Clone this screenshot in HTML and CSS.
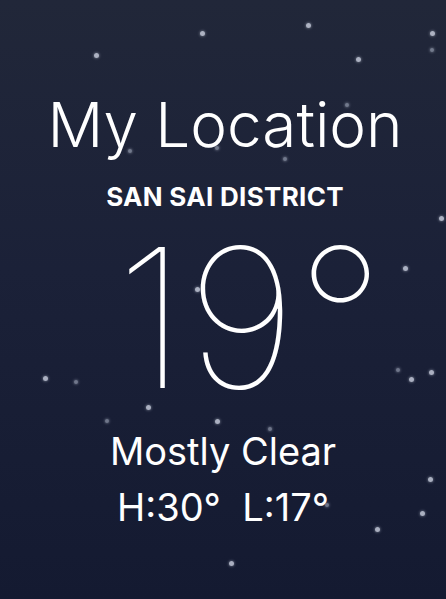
FILE: index.html
```html
<!DOCTYPE html>
<html lang="en">
<head>
    <meta charset="UTF-8">
    <meta name="viewport" content="width=device-width, initial-scale=1.0">
    <title>Weather</title>

    <link rel="stylesheet" href="styles.css">
</head>
<body>
    <div id="sky">
        <span class="star" style="left:96px;top:55px"></span>
        <span class="star" style="left:202px;top:33px"></span>
        <span class="star" style="left:308px;top:25px"></span>
        <span class="star" style="left:358px;top:59px"></span>
        <span class="star" style="left:432px;top:33px"></span>
        <span class="star small" style="left:432px;top:50px"></span>
        <span class="star small" style="left:130px;top:151px"></span>
        <span class="star small" style="left:217px;top:148px"></span>
        <span class="star small" style="left:347px;top:105px"></span>
        <span class="star small" style="left:285px;top:159px"></span>
        <span class="star" style="left:441px;top:218px"></span>
        <span class="star" style="left:405px;top:268px"></span>
        <span class="star" style="left:197px;top:289px"></span>
        <span class="star small" style="left:398px;top:370px"></span>
        <span class="star" style="left:411px;top:379px"></span>
        <span class="star" style="left:431px;top:372px"></span>
        <span class="star" style="left:45px;top:378px"></span>
        <span class="star small" style="left:76px;top:382px"></span>
        <span class="star" style="left:148px;top:407px"></span>
        <span class="star small" style="left:107px;top:421px"></span>
        <span class="star" style="left:217px;top:421px"></span>
        <span class="star small" style="left:270px;top:429px"></span>
        <span class="star small" style="left:327px;top:505px"></span>
        <span class="star" style="left:430px;top:479px"></span>
        <span class="star" style="left:422px;top:513px"></span>
        <span class="star" style="left:377px;top:529px"></span>
        <span class="star" style="left:231px;top:563px"></span>
    </div>

    <div id="container">
        <h1 class="place">My Location</h1>
        <p class="district">SAN SAI DISTRICT</p>
        <p class="temp">19°</p>
        <p class="condition">Mostly Clear</p>
        <p class="range">H:30°&nbsp; L:17°</p>
    </div>
</body>
</html>
```

FILE: styles.css
```css
*{
    margin: 0;
    padding: 0;
    box-sizing: border-box;
}
body{
    height: 100vh;
    overflow: hidden;
    background: linear-gradient(180deg, #212739 0%, #1b2138 45%, #141a31 100%);
    color: white;
    font-family: Inter, "Noto Sans", sans-serif;
}
#sky{
    position: absolute;
    inset: 0;
}
.star{
    position: absolute;
    width: 5px;
    height: 5px;
    margin: -2px 0 0 -2px;
    border-radius: 50%;
    background-color: rgba(220, 226, 240, 0.75);
    box-shadow: 0 0 3px rgba(220, 226, 240, 0.6);
}
.star.small{
    width: 4px;
    height: 4px;
    background-color: rgba(200, 208, 225, 0.5);
}
#container{
    position: relative;
    display: flex;
    flex-direction: column;
    align-items: center;
    padding-top: 94px;
    line-height: 1;
}
.place{
    font-size: 62px;
    font-weight: 300;
    padding-left: 4px;
}
.district{
    margin-top: 28px;
    font-size: 26px;
    font-weight: 700;
    letter-spacing: 0.3px;
    padding-left: 4px;
}
.temp{
    margin-top: 30px;
    font-size: 194px;
    font-weight: 100;
    line-height: 0.8;
    padding-left: 54px;
}
.condition{
    margin-top: 37px;
    font-size: 38px;
    font-weight: 400;
}
.range{
    margin-top: 18px;
    font-size: 38px;
    font-weight: 400;
}
```
